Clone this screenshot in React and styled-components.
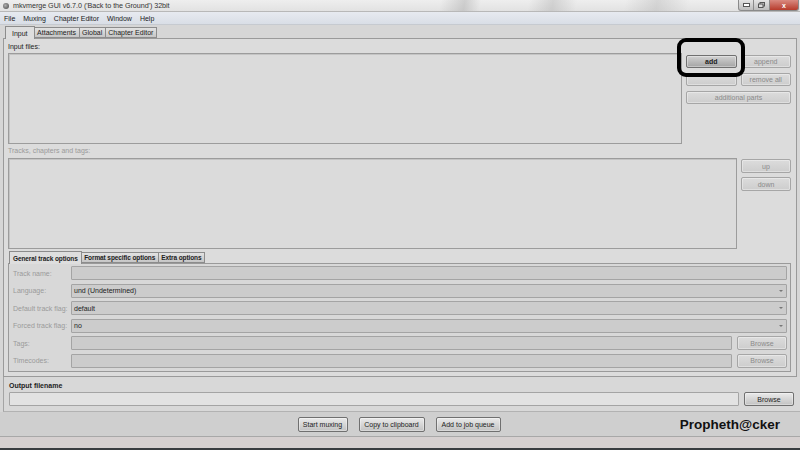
import React from "react";
import styled, { createGlobalStyle } from "styled-components";

const GlobalStyle = createGlobalStyle`
  html, body {
    margin: 0;
    padding: 0;
    background: #d4d4d4;
  }
  body {
    font-family: "Liberation Sans", Arial, sans-serif;
  }
`;

const Window = styled.div`
  position: relative;
  width: 800px;
  height: 450px;
  display: flex;
  flex-direction: column;
  background: #d6d6d6;
  overflow: hidden;
  color: #222;
  font-size: 7px;
`;

const TitleBar = styled.div`
  height: 12px;
  display: flex;
  align-items: center;
  background:
    linear-gradient(100deg, transparent 0 55%, rgba(150,150,150,0.35) 58%, transparent 60%, transparent 66%, rgba(150,150,150,0.3) 69%, transparent 72%, transparent 78%, rgba(160,160,160,0.3) 82%, transparent 86%),
    linear-gradient(#eeeeee, #e2e2e2);
  border-bottom: 1px solid #b8b8b8;
  box-sizing: border-box;
`;

const AppIcon = styled.span`
  width: 6px;
  height: 6px;
  margin: 0 4px 0 3px;
  border-radius: 50%;
  background: radial-gradient(circle at 40% 40%, #b0b0b0, #444);
`;

const TitleText = styled.span`
  font-size: 7.2px;
  letter-spacing: -0.05px;
  color: #333;
  flex: 1;
`;

const Controls = styled.div`
  display: flex;
  align-self: flex-start;
  height: 11px;
  margin-right: 1px;
`;

const Ctrl = styled.div`
  width: ${(p) => p.$w}px;
  height: 11px;
  box-sizing: border-box;
  border: 1px solid #8a8a8a;
  border-top: none;
  border-left: ${(p) => (p.$first ? "1px solid #8a8a8a" : "none")};
  border-radius: ${(p) => p.$radius || "0"};
  background: ${(p) =>
    p.$close
      ? "linear-gradient(#d98a80, #b73c2c)"
      : "linear-gradient(#e4e4e4, #bdbdbd)"};
  display: flex;
  align-items: center;
  justify-content: center;
  color: #fff;
  font-size: 7px;
  font-weight: bold;
`;

const MenuBar = styled.div`
  height: 12px;
  display: flex;
  align-items: center;
  gap: 8px;
  padding-left: 4px;
  background: linear-gradient(#e7eaf0, #d9dee6);
  border-bottom: 1px solid #c6cad0;
`;

const MenuItem = styled.span`
  font-size: 7px;
  color: #1a1a1a;
`;

const TabStrip = styled.div`
  display: flex;
  align-items: flex-end;
  height: 13px;
  padding-left: ${(p) => p.$pad || 5}px;
  margin-top: ${(p) => p.$mt || 0}px;
`;

const Tab = styled.div`
  height: ${(p) => (p.$active ? 13 : 11)}px;
  box-sizing: border-box;
  padding: 0 ${(p) => (p.$active ? p.$apad || 3 : 2.5)}px;
  display: flex;
  align-items: center;
  font-size: ${(p) => (p.$bold ? 6.5 : 7)}px;
  letter-spacing: ${(p) => (p.$bold ? "-0.1px" : "0")};
  font-weight: ${(p) => (p.$bold ? "bold" : "normal")};
  white-space: nowrap;
  color: #222;
  background: ${(p) =>
    p.$active ? "#dedede" : "linear-gradient(#e2e2e2, #c6c6c6)"};
  border: 1px solid #8c8c8c;
  border-bottom: ${(p) => (p.$active ? "none" : "1px solid #8c8c8c")};
  margin-right: -1px;
  position: relative;
  z-index: ${(p) => (p.$active ? 2 : 1)};
  margin-bottom: ${(p) => (p.$active ? "-1px" : "0")};
`;

const MainPanel = styled.div`
  margin: 0 3px;
  height: 339px;
  box-sizing: border-box;
  border: 1px solid #9a9a9a;
  background: #dcdcdc;
  padding: 2px 5px 0 4px;
  display: flex;
  flex-direction: column;
`;

const Label = styled.div`
  font-size: 7px;
  color: ${(p) => (p.$dim ? "#9a9a9a" : "#222")};
  font-weight: ${(p) => (p.$bold ? "bold" : "normal")};
  height: ${(p) => p.$h || 10}px;
  line-height: ${(p) => p.$h || 10}px;
`;

const Row = styled.div`
  display: flex;
  gap: 4px;
  margin-top: ${(p) => p.$mt || 0}px;
`;

const ListBox = styled.div`
  flex: 1;
  height: ${(p) => p.$h}px;
  box-sizing: border-box;
  background: #dbdbdb;
  border: 1px solid #9c9c9c;
  box-shadow: inset 1px 1px 0 #c4c4c4;
`;

const ButtonGrid = styled.div`
  width: ${(p) => p.$w}px;
  display: grid;
  grid-template-columns: ${(p) => (p.$cols === 2 ? "1fr 1fr" : "1fr")};
  column-gap: 4px;
  row-gap: ${(p) => p.$gap || 5}px;
  align-content: start;
  padding-top: ${(p) => p.$pt || 0}px;
`;

const Btn = styled.div`
  height: ${(p) => p.$h || 13}px;
  width: ${(p) => (p.$w ? `${p.$w}px` : "auto")};
  box-sizing: border-box;
  grid-column: ${(p) => (p.$span ? "1 / span 2" : "auto")};
  border-radius: 2px;
  display: flex;
  align-items: center;
  justify-content: center;
  font-size: 7px;
  white-space: nowrap;
  border: 1px solid ${(p) => (p.$kind === "off" ? "#a6a6a6" : "#707070")};
  color: ${(p) => (p.$kind === "off" ? "#8a8a8a" : "#1c1c1c")};
  font-weight: ${(p) => (p.$kind === "hot" ? "bold" : "normal")};
  background: ${(p) =>
    p.$kind === "hot"
      ? "linear-gradient(#d2d2d2, #a4a4a4)"
      : p.$kind === "on"
      ? "linear-gradient(#eaeaea, #c2c2c2)"
      : "linear-gradient(#dcdcdc, #cdcdcd)"};
  box-shadow: inset 0 0 0 1px rgba(255, 255, 255, 0.35);
`;

const SubPanel = styled.div`
  height: 109px;
  box-sizing: border-box;
  border: 1px solid #9a9a9a;
  background: #d8d8d8;
  padding: 2px 3px 0 3px;
  display: flex;
  flex-direction: column;
  gap: 3.6px;
`;

const FieldRow = styled.div`
  display: flex;
  align-items: center;
  height: 14px;
  gap: 5px;
`;

const FieldLabel = styled.div`
  width: 53px;
  flex: none;
  font-size: 7px;
  color: #9a9a9a;
  padding-left: 1px;
  white-space: nowrap;
`;

const Field = styled.div`
  flex: 1;
  height: 14px;
  box-sizing: border-box;
  border: 1px solid #a4a4a4;
  border-radius: 1px;
  background: ${(p) => (p.$light ? "#e2e2e2" : "#cccccc")};
  display: flex;
  align-items: center;
  padding: 0 2px;
  font-size: 7px;
  color: #222;
`;

const Arrow = styled.span`
  margin-left: auto;
  margin-right: 1px;
  width: 0;
  height: 0;
  border-left: 2px solid transparent;
  border-right: 2px solid transparent;
  border-top: 2px solid #777;
`;

const OutputGroup = styled.div`
  height: 35px;
  margin-left: 3px;
  box-sizing: border-box;
  border-left: 1px solid #a4a4a4;
  border-bottom: 1px solid #b2b2b2;
  background: #d8d8d8;
  padding: 2px 6px 0 5px;
`;

const BottomBar = styled.div`
  height: 24px;
  display: grid;
  grid-template-columns: 1fr auto 1fr;
  align-items: center;
  background: #cfcfcf;
  border-bottom: 1px solid #a8a8a8;
`;

const BottomButtons = styled.div`
  display: flex;
  gap: 11px;
  grid-column: 2;
  padding-right: 2px;
`;

const Mark = styled.div`
  grid-column: 3;
  justify-self: end;
  margin-right: 20px;
  font-family: "Liberation Sans", Arial, sans-serif;
  font-weight: bold;
  font-size: 13.5px;
  color: #111;
`;

const StatusBar = styled.div`
  height: 11px;
  background: #d6d0d0;
`;

const Taskbar = styled.div`
  flex: 1;
  background: #3a3d40;
`;

const Highlight = styled.div`
  position: absolute;
  left: 677px;
  top: 38px;
  width: 68px;
  height: 39px;
  box-sizing: border-box;
  border: 4px solid #000;
  border-radius: 9px;
  pointer-events: none;
`;

const fields = [
  { label: "Track name:" },
  { label: "Language:", value: "und (Undetermined)", combo: true },
  { label: "Default track flag:", value: "default", combo: true },
  { label: "Forced track flag:", value: "no", combo: true },
  { label: "Tags:", browse: true },
  { label: "Timecodes:", browse: true },
];

export default function App() {
  return (
    <>
      <GlobalStyle />
      <Window>
        <TitleBar>
          <AppIcon />
          <TitleText>mkvmerge GUI v6.7.0 ('Back to the Ground') 32bit</TitleText>
          <Controls>
            <Ctrl $w={16} $first $radius="0 0 0 3px">
              <svg width="7" height="4" viewBox="0 0 7 4">
                <rect x="0.5" y="0.5" width="6" height="3" fill="#fff" stroke="#555" />
              </svg>
            </Ctrl>
            <Ctrl $w={16}>
              <svg width="7" height="6" viewBox="0 0 7 6">
                <rect x="2" y="0.5" width="4.5" height="3.5" fill="none" stroke="#555" />
                <rect x="0.5" y="2" width="4.5" height="3.5" fill="#ddd" stroke="#555" />
              </svg>
            </Ctrl>
            <Ctrl $w={29} $close $radius="0 0 3px 0">x</Ctrl>
          </Controls>
        </TitleBar>

        <MenuBar>
          <MenuItem>File</MenuItem>
          <MenuItem>Muxing</MenuItem>
          <MenuItem>Chapter Editor</MenuItem>
          <MenuItem>Window</MenuItem>
          <MenuItem>Help</MenuItem>
        </MenuBar>

        <TabStrip>
          <Tab $active $apad={6}>Input</Tab>
          <Tab>Attachments</Tab>
          <Tab>Global</Tab>
          <Tab>Chapter Editor</Tab>
        </TabStrip>

        <MainPanel>
          <Label $h={11}>Input files:</Label>
          <Row $mt={1}>
            <ListBox $h={91} />
            <ButtonGrid $w={105} $cols={2} $gap={5} $pt={2}>
              <Btn $kind="hot">add</Btn>
              <Btn $kind="off">append</Btn>
              <Btn $kind="off" />
              <Btn $kind="off">remove all</Btn>
              <Btn $kind="off" $span>additional parts</Btn>
            </ButtonGrid>
          </Row>
          <Label $dim $h={13}>Tracks, chapters and tags:</Label>
          <Row $mt={1}>
            <ListBox $h={91} />
            <ButtonGrid $w={50} $gap={4} $pt={1}>
              <Btn $kind="off" $h={14}>up</Btn>
              <Btn $kind="off" $h={14}>down</Btn>
            </ButtonGrid>
          </Row>

          <TabStrip $pad={1} $mt={1}>
            <Tab $active $bold>General track options</Tab>
            <Tab $bold>Format specific options</Tab>
            <Tab $bold>Extra options</Tab>
          </TabStrip>
          <SubPanel>
            {fields.map((f) => (
              <FieldRow key={f.label}>
                <FieldLabel>{f.label}</FieldLabel>
                <Field>
                  {f.value}
                  {f.combo && <Arrow />}
                </Field>
                {f.browse && (
                  <Btn $kind="off" $w={50} $h={14}>
                    Browse
                  </Btn>
                )}
              </FieldRow>
            ))}
          </SubPanel>
        </MainPanel>

        <OutputGroup>
          <Label $bold $h={13}>Output filename</Label>
          <FieldRow>
            <Field $light />
            <Btn $kind="on" $w={50} $h={14}>
              Browse
            </Btn>
          </FieldRow>
        </OutputGroup>

        <BottomBar>
          <BottomButtons>
            <Btn $kind="on" $w={50} $h={15}>Start muxing</Btn>
            <Btn $kind="on" $w={66} $h={15}>Copy to clipboard</Btn>
            <Btn $kind="on" $w={65} $h={15}>Add to job queue</Btn>
          </BottomButtons>
          <Mark>Propheth@cker</Mark>
        </BottomBar>
        <StatusBar />
        <Taskbar />

        <Highlight />
      </Window>
    </>
  );
}
